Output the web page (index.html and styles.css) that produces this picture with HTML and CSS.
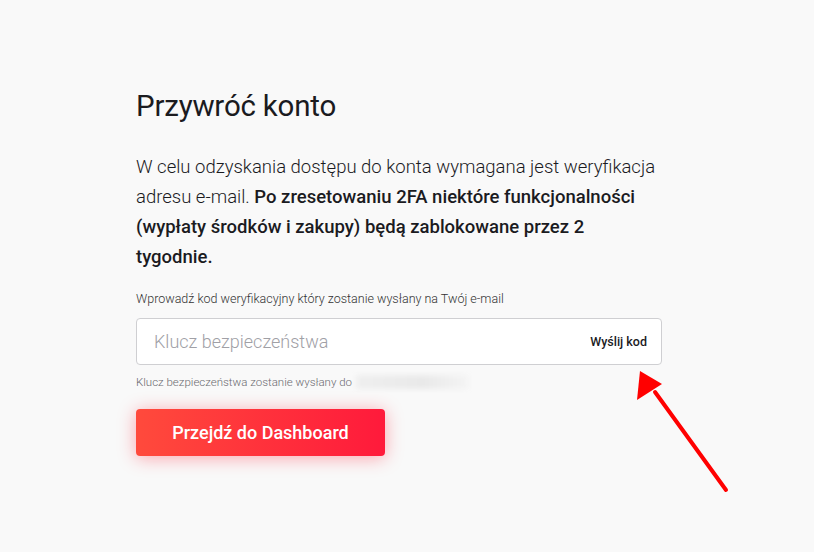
FILE: index.html
```html
<!DOCTYPE html>
<html lang="pl">
<head>
  <meta charset="UTF-8">
  <title>Przywróć konto</title>
  <link rel="stylesheet" href="styles.css">
</head>
<body>

<div class="recover">
  <h1 class="recover-title">Przywróć konto</h1>

  <p class="recover-text">
    W celu odzyskania dostępu do konta wymagana jest weryfikacja adresu e-mail.
    <strong>Po zresetowaniu 2FA niektóre funkcjonalności (wypłaty środków i zakupy) będą zablokowane przez 2 tygodnie.</strong>
  </p>

  <label class="field-label" for="code">Wprowadź kod weryfikacyjny który zostanie wysłany na Twój e-mail</label>
  <div class="code-field">
    <input type="text" id="code" placeholder="Klucz bezpieczeństwa" />
    <button type="button" class="send-code">Wyślij kod</button>
  </div>
  <div class="field-hint">Klucz bezpieczeństwa zostanie wysłany do <span class="masked"></span></div>

  <button type="button" class="primary">Przejdź do Dashboard</button>
</div>

<!-- annotation arrow -->
<svg class="arrow" width="814" height="552" viewBox="0 0 814 552">
  <line x1="726" y1="490" x2="655" y2="392" stroke="#ff0000" stroke-width="4" stroke-linecap="round" />
  <polygon points="640,371 637,400 662,384" fill="#ff0000" />
</svg>

</body>
</html>
```

FILE: styles.css
```css
html, body { margin: 0; padding: 0; }
body {
  background-color: #f9f9f9;
  font-family: Roboto, "Noto Sans", sans-serif;
  color: #1b1b1f;
  min-height: 552px;
}

.recover { width: 526px; padding: 86px 0 0 136px; }

.recover-title {
  font-size: 29.5px; font-weight: 400; margin: 0 0 26px;
  line-height: 40px; letter-spacing: -0.2px;
}

.recover-text {
  font-size: 18.5px; line-height: 30px; margin: 0 0 19px;
  font-weight: 300;
}
.recover-text strong { font-weight: 500; }

.field-label {
  display: block; font-size: 12.5px; color: #333; margin-bottom: 12px;
  font-weight: 300;
}

.code-field {
  display: flex; align-items: center;
  background: #fff; border: 1px solid #cfcfd2; border-radius: 4px;
  height: 45px; padding: 0 14px 0 17px;
}
.code-field input {
  flex: 1; border: none; outline: none; background: transparent;
  font-family: inherit; font-size: 18px; font-weight: 300; color: #222;
  padding: 0;
}
.code-field input::placeholder { color: #a0a0a6; }

.send-code {
  border: none; background: none; padding: 0; cursor: pointer;
  font-family: inherit; font-size: 12.5px; font-weight: 500; color: #1b1b1f;
}

.field-hint {
  display: flex; align-items: center;
  font-size: 11.5px; color: #6b6b70; margin: 10px 0 20px; font-weight: 300;
}
.masked {
  display: inline-block; width: 112px; height: 14px; margin-left: 4px;
  background: linear-gradient(90deg, #efefef, #e9e9e9 60%, #f4f4f4);
  filter: blur(2px);
}

.primary {
  width: 249px; height: 47px; border: none; border-radius: 4px; cursor: pointer;
  background: linear-gradient(90deg, #ff4a3c, #ff1a3b);
  color: #fff; font-family: inherit; font-size: 18px; font-weight: 500;
  box-shadow: 0 2px 18px rgba(255, 40, 60, 0.4);
}

.arrow { position: absolute; left: 0; top: 0; pointer-events: none; }
```
